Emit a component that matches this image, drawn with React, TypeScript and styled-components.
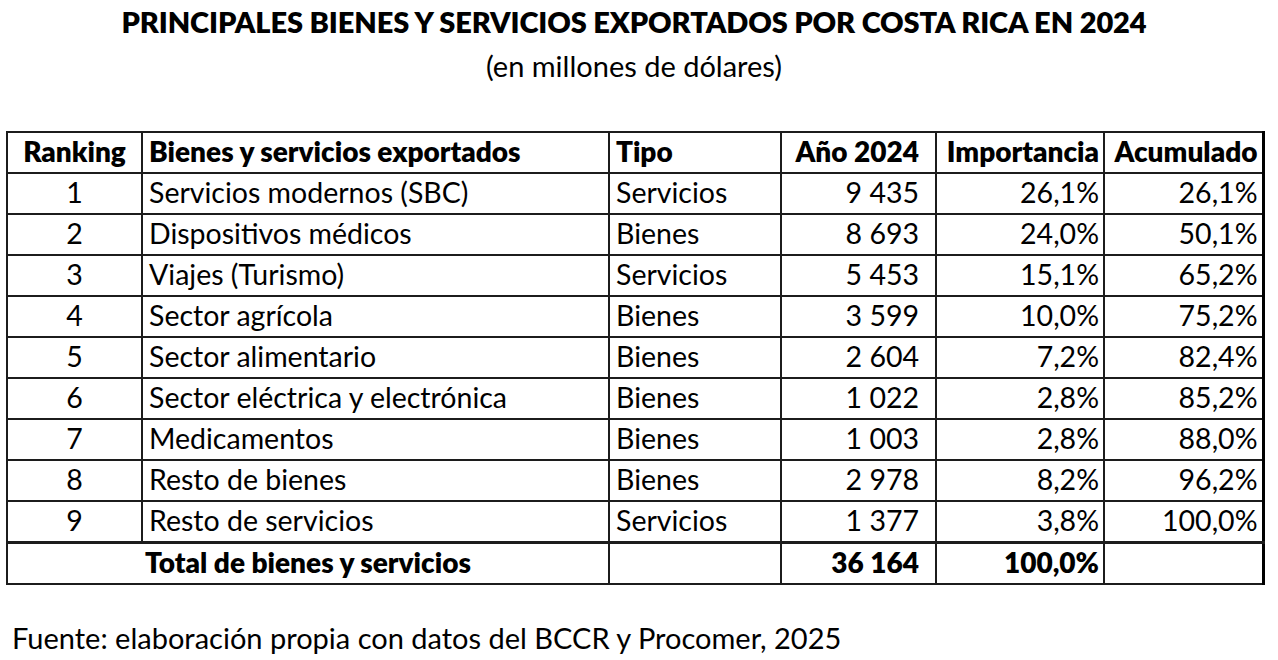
import React from "react";
import styled, { createGlobalStyle } from "styled-components";

type Row = {
    rank: number;
    name: string;
    tipo: string;
    value: string;
    share: string;
    cumul: string;
};

const rows: Row[] = [
    { rank: 1, name: "Servicios modernos (SBC)", tipo: "Servicios", value: "9 435", share: "26,1%", cumul: "26,1%" },
    { rank: 2, name: "Dispositivos médicos", tipo: "Bienes", value: "8 693", share: "24,0%", cumul: "50,1%" },
    { rank: 3, name: "Viajes (Turismo)", tipo: "Servicios", value: "5 453", share: "15,1%", cumul: "65,2%" },
    { rank: 4, name: "Sector agrícola", tipo: "Bienes", value: "3 599", share: "10,0%", cumul: "75,2%" },
    { rank: 5, name: "Sector alimentario", tipo: "Bienes", value: "2 604", share: "7,2%", cumul: "82,4%" },
    { rank: 6, name: "Sector eléctrica y electrónica", tipo: "Bienes", value: "1 022", share: "2,8%", cumul: "85,2%" },
    { rank: 7, name: "Medicamentos", tipo: "Bienes", value: "1 003", share: "2,8%", cumul: "88,0%" },
    { rank: 8, name: "Resto de bienes", tipo: "Bienes", value: "2 978", share: "8,2%", cumul: "96,2%" },
    { rank: 9, name: "Resto de servicios", tipo: "Servicios", value: "1 377", share: "3,8%", cumul: "100,0%" },
];

const GlobalStyle = createGlobalStyle`
    body {
        margin: 0;
        background: #fff;
        color: #000;
        font-family: Lato, "Open Sans", sans-serif;
    }
`;

export default function App() {
    return (
        <Page>
            <GlobalStyle />
            <Title>PRINCIPALES BIENES Y SERVICIOS EXPORTADOS POR COSTA RICA EN 2024</Title>
            <Subtitle>(en millones de dólares)</Subtitle>
            <Table>
                <colgroup>
                    <col style={{ width: 135 }} />
                    <col style={{ width: 467 }} />
                    <col style={{ width: 172 }} />
                    <col style={{ width: 155 }} />
                    <col style={{ width: 168 }} />
                    <col style={{ width: 159 }} />
                </colgroup>
                <thead>
                    <tr>
                        <HeadCell align="center">Ranking</HeadCell>
                        <HeadCell>Bienes y servicios exportados</HeadCell>
                        <HeadCell>Tipo</HeadCell>
                        <HeadCell align="right" $pad={16}>Año 2024</HeadCell>
                        <HeadCell align="right">Importancia</HeadCell>
                        <HeadCell align="right">Acumulado</HeadCell>
                    </tr>
                </thead>
                <tbody>
                    {rows.map((r) => (
                        <tr key={r.rank}>
                            <Cell align="center">{r.rank}</Cell>
                            <Cell>{r.name}</Cell>
                            <Cell>{r.tipo}</Cell>
                            <Cell align="right" $pad={16}>{r.value}</Cell>
                            <Cell align="right">{r.share}</Cell>
                            <Cell align="right">{r.cumul}</Cell>
                        </tr>
                    ))}
                    <TotalRow>
                        <HeadCell colSpan={2} align="center">Total de bienes y servicios</HeadCell>
                        <HeadCell />
                        <HeadCell align="right" $pad={16}>36 164</HeadCell>
                        <HeadCell align="right">100,0%</HeadCell>
                        <HeadCell />
                    </TotalRow>
                </tbody>
            </Table>
            <Source>Fuente: elaboración propia con datos del BCCR y Procomer, 2025</Source>
        </Page>
    );
}

const Page = styled.div`
    width: 1278px;
    height: 660px;
    padding: 6px 0 0 6px;
    box-sizing: border-box;
`;

const Title = styled.h1`
    width: 1256px;
    margin: 0;
    text-align: center;
    font-size: 29px;
    line-height: 32px;
    font-weight: 800;
    letter-spacing: -0.1px;
`;

const Subtitle = styled.p`
    width: 1256px;
    margin: 13px 0 0;
    text-align: center;
    font-size: 29px;
    line-height: 30px;
`;

const Table = styled.table`
    margin-top: 50px;
    width: 1256px;
    table-layout: fixed;
    border-collapse: collapse;
    border-right: 3px solid #000;
`;

type CellProps = { align?: "left" | "center" | "right"; $pad?: number };

const Cell = styled.td<CellProps>`
    height: 36px;
    padding: 0 ${(p) => p.$pad ?? 4}px 3px ${(p) => (p.align === "center" ? 4 : 6)}px;
    border: 2px solid #1c1c1c;
    text-align: ${(p) => p.align ?? "left"};
    font-size: 28.5px;
    line-height: 30px;
    white-space: nowrap;
    overflow: hidden;
`;

const HeadCell = styled(Cell).attrs({ as: "td" })`
    font-size: 28px;
    font-weight: 800;
`;

const TotalRow = styled.tr`
    td {
        border-top-width: 3px;
        border-bottom-width: 2px;
    }
`;

const Source = styled.p`
    margin: 38px 0 0 6px;
    font-size: 29px;
    line-height: 30px;
`;
